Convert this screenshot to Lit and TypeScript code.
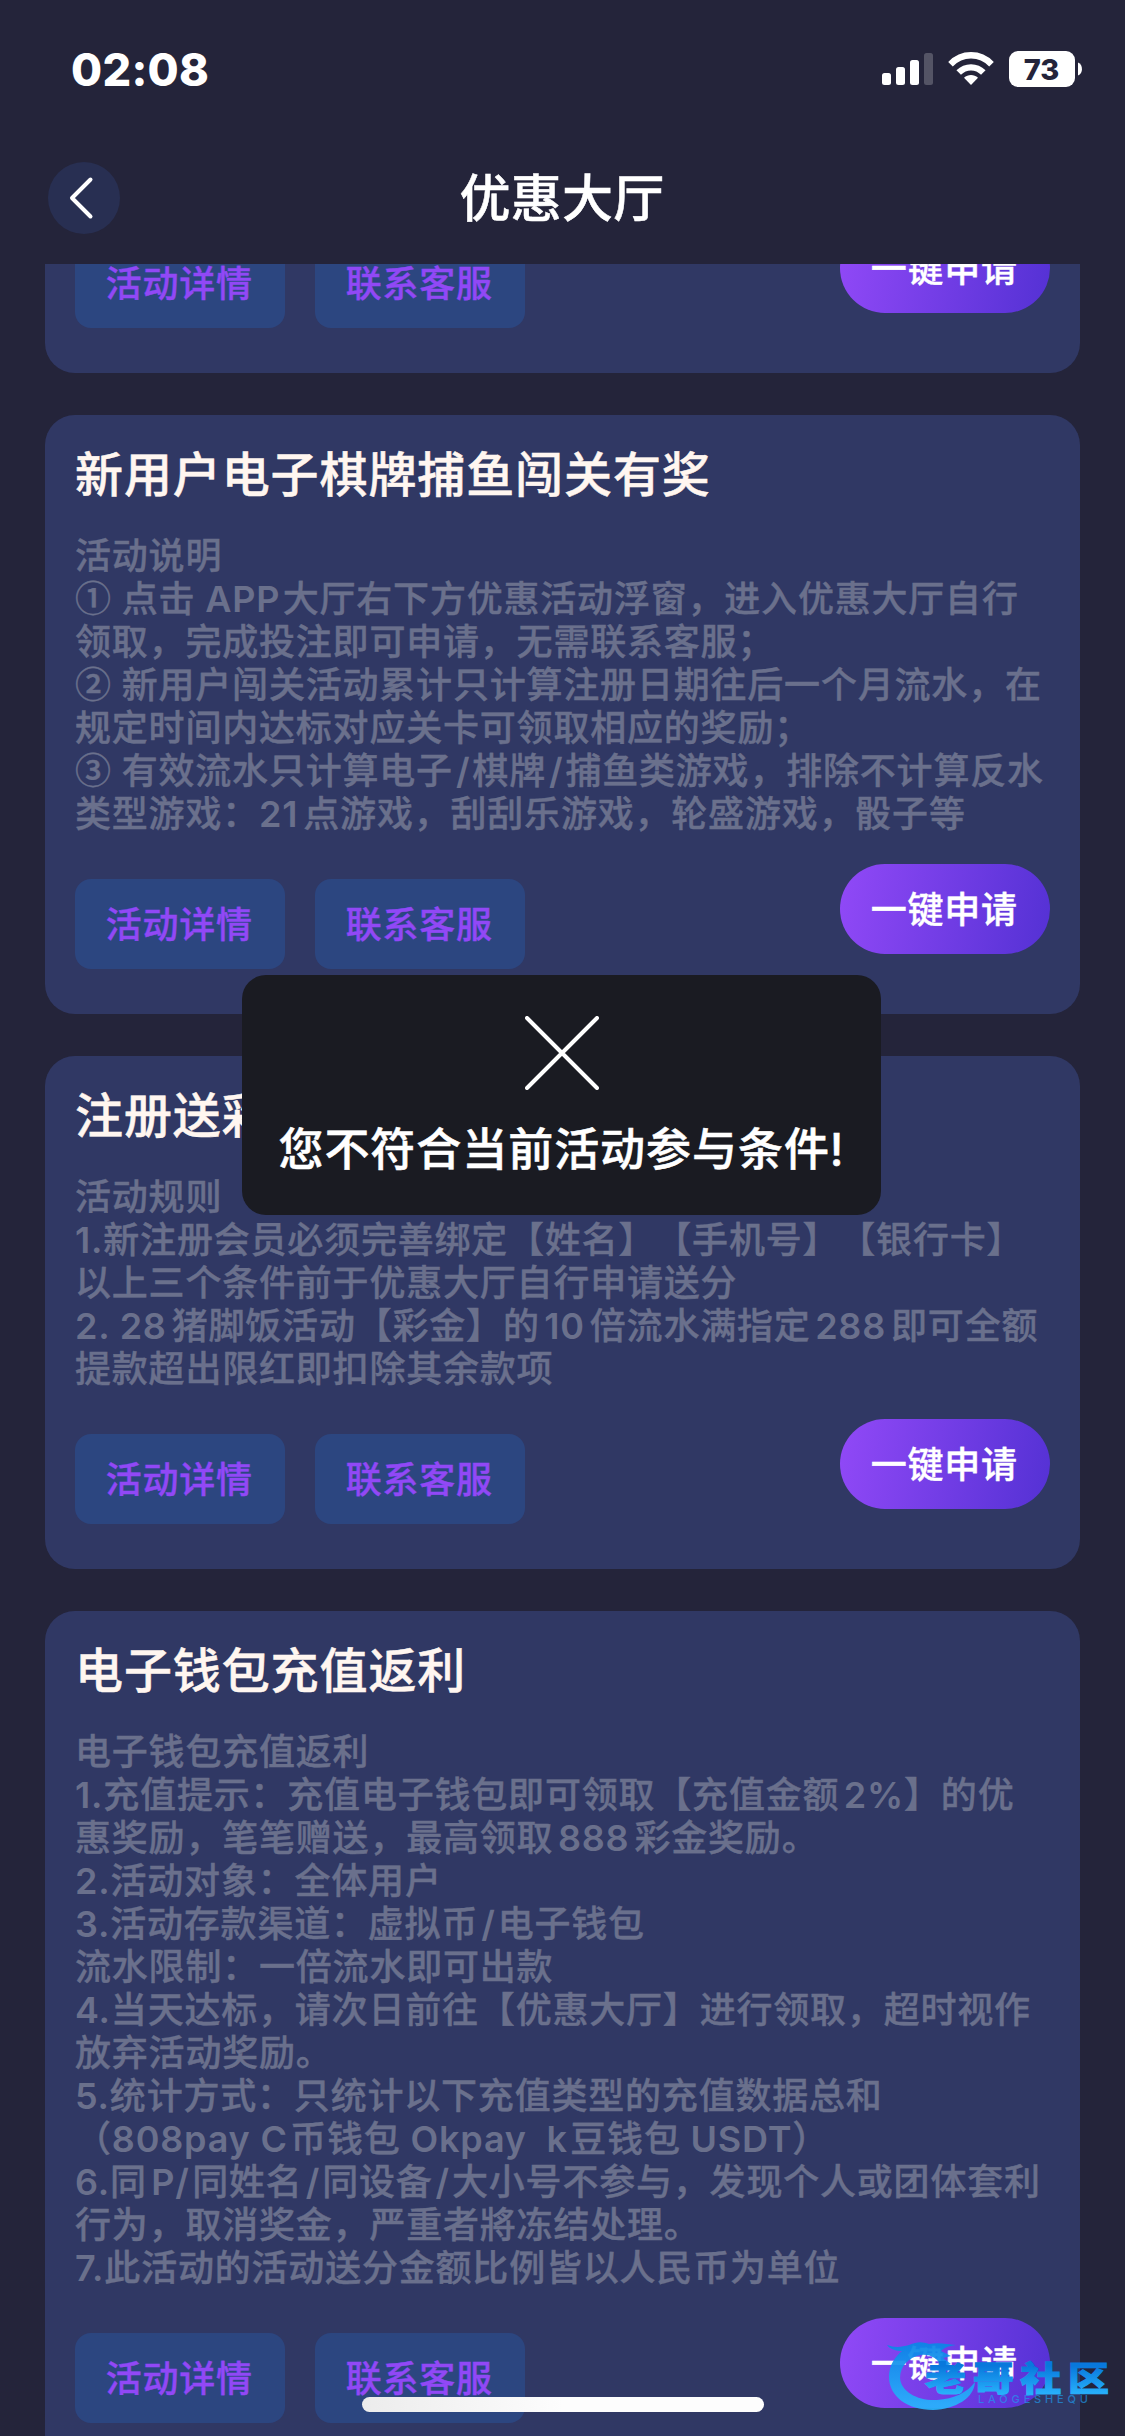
import { LitElement, html, css } from "lit";
import { customElement, property } from "lit/decorators.js";

const font = css`Inter, "Noto Sans CJK SC", sans-serif`;

interface Promo {
  title?: string;
  lines?: string[];
}

const promos: Promo[] = [
  {},
  {
    title: "新用户电子棋牌捕鱼闯关有奖",
    lines: [
      "活动说明",
      "① 点击 APP大厅右下方优惠活动浮窗，进入优惠大厅自行",
      "领取，完成投注即可申请，无需联系客服；",
      "② 新用户闯关活动累计只计算注册日期往后一个月流水，在",
      "规定时间内达标对应关卡可领取相应的奖励；",
      "③ 有效流水只计算电子/棋牌/捕鱼类游戏，排除不计算反水",
      "类型游戏：21点游戏，刮刮乐游戏，轮盛游戏，骰子等",
    ],
  },
  {
    title: "注册送彩",
    lines: [
      "活动规则",
      "1.新注册会员必须完善绑定【姓名】【手机号】【银行卡】",
      "以上三个条件前于优惠大厅自行申请送分",
      "2. 28猪脚饭活动【彩金】的10倍流水满指定288即可全额",
      "提款超出限红即扣除其余款项",
    ],
  },
  {
    title: "电子钱包充值返利",
    lines: [
      "电子钱包充值返利",
      "1.充值提示：充值电子钱包即可领取【充值金额2%】的优",
      "惠奖励，笔笔赠送，最高领取888彩金奖励。",
      "2.活动对象：全体用户",
      "3.活动存款渠道：虚拟币/电子钱包",
      "流水限制：一倍流水即可出款",
      "4.当天达标，请次日前往【优惠大厅】进行领取，超时视作",
      "放弃活动奖励。",
      "5.统计方式：只统计以下充值类型的充值数据总和",
      "（808pay C币钱包 Okpay  k豆钱包 USDT）",
      "6.同P/同姓名/同设备/大小号不参与，发现个人或团体套利",
      "行为，取消奖金，严重者將冻结处理。",
      "7.此活动的活动送分金额比例皆以人民币为单位",
    ],
  },
];

const isHan = (c: string | undefined) => !!c && /\p{Script=Han}/u.test(c);

/* Splits a line into CJK and Latin runs; Latin runs get a gap next to ideographs. */
function mixed(line: string) {
  const parts = line.match(/[\x20-\x7e]+|[①-⑳]|[^\x20-\x7e①-⑳]+/g) ?? [];
  return parts.map((p, i) => {
    if (/^[①-⑳]/.test(p)) return html`<span class="circled">${p}</span>`;
    if (!/^[\x20-\x7e]/.test(p)) return p;
    const before = isHan(parts[i - 1]?.slice(-1)) && /^[\w/%]/.test(p);
    const after = isHan(parts[i + 1]?.[0]) && /[\w/%]$/.test(p);
    const gapAfter = !after ? "" : /\d$/.test(p) ? "gap-digit" : "gap-r";
    const kind = p === "/" ? "slash" : "";
    return html`<span class="latin ${before ? "gap-l" : ""} ${gapAfter} ${kind}">${p}</span>`;
  });
}

@customElement("status-bar")
class StatusBar extends LitElement {
  static styles = css`
    :host {
      display: flex;
      justify-content: space-between;
      align-items: center;
      height: 138px;
      padding: 0 43px 0 71px;
      box-sizing: border-box;
      font-family: ${font};
      color: #fff;
    }
    .time {
      font-size: 45px;
      font-weight: 800;
      line-height: 1;
      letter-spacing: 0.3px;
    }
    .icons {
      display: block;
    }
    .level {
      font: 800 29px ${font};
    }
  `;
  render() {
    return html`
      <span class="time">02:08</span>
      <svg class="icons" width="201" height="38" viewBox="881 50 201 38">
        <g fill="#fff">
          <rect x="882" y="73" width="9" height="12" rx="2.5" />
          <rect x="896" y="67" width="9" height="18" rx="2.5" />
          <rect x="910" y="60" width="9" height="25" rx="2.5" />
          <rect x="924" y="53" width="9" height="32" rx="2.5" opacity=".22" />
          <path d="M971 85l-7-7.2c4-3.600 10-3.600 14 0z" />
          <rect x="1009" y="51" width="66" height="36" rx="9" />
          <path d="M1078 62.500c5.300 2 5.300 11 0 13z" />
        </g>
        <g fill="none" stroke="#fff" stroke-width="6.400">
          <path d="M950.500 64.200c11.500-11.900 29.500-11.900 41 0" />
          <path d="M958.700 72.600c7-7 17.600-7 24.600 0" />
        </g>
        <text class="level" x="1041.500" y="79.500" text-anchor="middle" fill="#24243a">73</text>
      </svg>
    `;
  }
}

@customElement("promo-card")
class PromoCard extends LitElement {
  @property({ attribute: false }) promo: Promo = {};
  static styles = css`
    :host {
      display: block;
      flex: none;
      box-sizing: border-box;
      padding: 0 30px 45px;
      border-radius: 30px;
      background: #303864;
      font-family: ${font};
      font-weight: 500;
      letter-spacing: 0.8px;
      text-spacing-trim: space-all;
    }
    .title {
      margin: 0 0 1.5px;
      height: 118px;
      line-height: 119px;
      font-size: 48px;
      font-weight: 500;
      letter-spacing: 0.9px;
      color: #fff6f0;
      white-space: nowrap;
      -webkit-text-stroke: 0.5px #fff6f0;
    }
    .line {
      height: 43px;
      line-height: 43px;
      font-size: 36px;
      color: #6a708c;
      white-space: pre;
      -webkit-text-stroke: 0.4px #6a708c;
    }
    .latin {
      font-weight: 600;
      -webkit-text-stroke: 0;
    }
    .circled {
      font-family: "Noto Sans CJK SC", sans-serif;
      line-height: 1;
    }
    .gap-l {
      margin-left: 4.5px;
    }
    .gap-r {
      margin-right: 2.5px;
    }
    .gap-digit {
      margin-right: 5px;
    }
    .slash {
      margin-left: 3px;
      margin-right: 2px;
    }
    .actions {
      display: flex;
      gap: 30px;
      padding-top: 28.5px;
    }
    .btn {
      width: 210px;
      height: 90px;
      margin-top: 15px;
      border-radius: 16px;
      background: #2c4680;
      color: #9148f6;
      font-size: 36px;
      line-height: 92px;
      text-align: center;
      text-indent: -1.5px;
      -webkit-text-stroke: 0.4px currentColor;
    }
    .apply {
      margin: 0 0 15px auto;
      border-radius: 45px;
      background: linear-gradient(100deg, #9149f7, #5431d4);
      color: #fff;
    }
  `;
  render() {
    const { title, lines = [] } = this.promo;
    return html`
      ${title ? html`<h2 class="title">${title}</h2>` : ""}
      ${lines.map((l) => html`<div class="line">${mixed(l)}</div>`)}
      <div class="actions">
        <div class="btn">活动详情</div>
        <div class="btn">联系客服</div>
        <div class="btn apply">一键申请</div>
      </div>
    `;
  }
}

@customElement("app-root")
class AppRoot extends LitElement {
  static styles = css`
    :host {
      display: flex;
      flex-direction: column;
      position: relative;
      width: 1125px;
      height: 2436px;
      overflow: hidden;
      background: #24243a;
      font-family: ${font};
      font-weight: 500;
      color: #fff;
    }
    .nav {
      display: grid;
      grid-template-columns: 72px 1fr 72px;
      align-items: center;
      height: 126px;
      padding: 0 48px 6px;
      box-sizing: border-box;
    }
    .back {
      display: block;
    }
    .heading {
      margin: 0;
      text-align: center;
      font-size: 51px;
      font-weight: 500;
      line-height: 73px;
      letter-spacing: 0.3px;
      text-indent: -1px;
      -webkit-text-stroke: 0.5px #fff;
    }
    .scroll {
      flex: 1;
      min-height: 0;
      overflow: hidden;
    }
    .list {
      display: flex;
      flex-direction: column;
      gap: 42px;
      margin: -69.5px 45px 0;
    }
    .toast {
      position: absolute;
      left: 242px;
      top: 975px;
      width: 639px;
      height: 240px;
      padding-top: 41px;
      box-sizing: border-box;
      border-radius: 24px;
      background: #1a1b22;
      display: flex;
      flex-direction: column;
      align-items: center;
      gap: 30px;
    }
    .message {
      font-size: 45px;
      line-height: 60px;
      letter-spacing: 0.95px;
      white-space: nowrap;
      -webkit-text-stroke: 0.5px #fff;
    }
    .home {
      position: absolute;
      left: 362px;
      top: 2397px;
      width: 402px;
      height: 15px;
      border-radius: 8px;
      background: linear-gradient(90deg, #ececec, #fdfdfd 50%);
    }
    .mark {
      position: absolute;
      left: 880px;
      top: 2330px;
    }
    .mark-name {
      font: 900 41px "Noto Sans CJK SC", sans-serif;
    }
    .mark-sub {
      font: 500 11px ${font};
    }
  `;
  render() {
    return html`
      <status-bar></status-bar>
      <header class="nav">
        <svg class="back" width="72" height="72" viewBox="0 0 72 72">
          <circle cx="36" cy="36" r="36" fill="#282f52" />
          <path d="M42.500 17.500L24 36l18.500 18.500" fill="none" stroke="#fff" stroke-width="4" stroke-linecap="round" stroke-linejoin="round" />
        </svg>
        <h1 class="heading">优惠大厅</h1>
      </header>
      <main class="scroll">
        <div class="list">
          ${promos.map((p) => html`<promo-card .promo=${p}></promo-card>`)}
        </div>
      </main>
      <div class="toast">
        <svg width="74" height="74" viewBox="0 0 74 74">
          <path d="M2 2l70 70M72 2L2 72" stroke="#fff" stroke-width="4" stroke-linecap="round" />
        </svg>
        <div class="message">您不符合当前活动参与条件!</div>
      </div>
      <div class="home"></div>
      <svg class="mark" width="240" height="90" viewBox="0 0 240 90">
        <defs>
          <linearGradient id="ring" gradientUnits="userSpaceOnUse" x1="0" y1="15" x2="0" y2="75">
            <stop offset="0" stop-color="#0a86e6" />
            <stop offset="1" stop-color="#28b2fc" />
          </linearGradient>
          <linearGradient id="name" x1="0" y1="0.300" x2="0" y2="0.850">
            <stop offset="0" stop-color="#0878dc" />
            <stop offset="1" stop-color="#27b0fb" />
          </linearGradient>
        </defs>
        <path
          fill="url(#ring)"
          opacity=".93"
          d="M7 15c8 3 15 2 22 0 9-4 14-3 20-1 9-2 18 0 27 1-8 1-12 3-15 6l10 5-8 2 8 6-9 3c-4-8-11-13-21-12-12 2-21 11-21 23 1 14 18 23 37 22 17-1 31-8 38-18-1 16-19 27-42 28C27 80 9 66 9 47c0-12 6-20 13-26-6 0-12-2-15-6z"
        />
        <g transform="translate(0 61) scale(1 .84)">
          <text class="mark-name" x="45" y="0" textLength="184" lengthAdjust="spacing" fill="url(#name)" stroke="url(#name)" stroke-width="1.200">老哥社区</text>
        </g>
        <text class="mark-sub" x="98" y="73" textLength="110" lengthAdjust="spacing" fill="#1f9cf0" opacity=".65">LAOGESHEQU</text>
      </svg>
    `;
  }
}
